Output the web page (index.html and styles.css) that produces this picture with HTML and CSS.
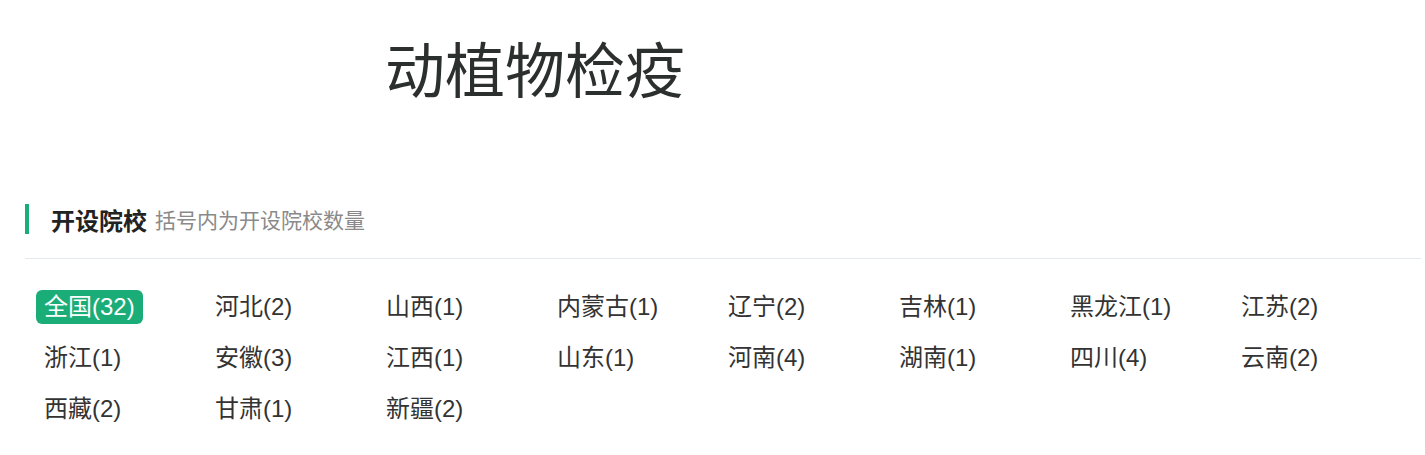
FILE: index.html
```html
<!DOCTYPE html>
<html lang="zh-CN">
<head>
	<meta charset="UTF-8">
	<title>动植物检疫</title>
	<link rel="stylesheet" href="styles.css">
</head>
<body>
	<div id="page">
		<h1 class="major-title">动植物检疫</h1>

		<div class="section-head">
			<span class="head-main">开设院校</span>
			<span class="head-sub">括号内为开设院校数量</span>
		</div>

		<div class="province-list">
			<a href="javascript:;" class="province active">全国(32)</a>
			<a href="javascript:;" class="province">河北(2)</a>
			<a href="javascript:;" class="province">山西(1)</a>
			<a href="javascript:;" class="province">内蒙古(1)</a>
			<a href="javascript:;" class="province">辽宁(2)</a>
			<a href="javascript:;" class="province">吉林(1)</a>
			<a href="javascript:;" class="province">黑龙江(1)</a>
			<a href="javascript:;" class="province">江苏(2)</a>
			<a href="javascript:;" class="province">浙江(1)</a>
			<a href="javascript:;" class="province">安徽(3)</a>
			<a href="javascript:;" class="province">江西(1)</a>
			<a href="javascript:;" class="province">山东(1)</a>
			<a href="javascript:;" class="province">河南(4)</a>
			<a href="javascript:;" class="province">湖南(1)</a>
			<a href="javascript:;" class="province">四川(4)</a>
			<a href="javascript:;" class="province">云南(2)</a>
			<a href="javascript:;" class="province">西藏(2)</a>
			<a href="javascript:;" class="province">甘肃(1)</a>
			<a href="javascript:;" class="province">新疆(2)</a>
		</div>
	</div>
</body>
</html>
```

FILE: styles.css
```css
* {
    margin: 0;
    padding: 0;
    text-decoration: none;
}

body {
    font-family: "Liberation Sans", "Noto Sans CJK SC", sans-serif;
    color: #333;
    background: #fff;
}

#page {
    padding: 43px 4px 0 25px;
}

.major-title {
    margin-left: 360px;
    font-size: 60px;
    font-weight: normal;
    line-height: 60px;
    color: #2b2f2e;
}

.section-head {
    display: flex;
    align-items: center;
    height: 30px;
    margin-top: 101px;
    padding-left: 22px;
    border-left: 4px solid #1aad78;
}

.head-main {
    font-size: 24px;
    font-weight: bold;
    color: #222;
}

.head-sub {
    margin-left: 8px;
    font-size: 21px;
    color: #8a8a8a;
}

.province-list {
    display: grid;
    grid-template-columns: repeat(8, 171px);
    row-gap: 17px;
    margin-top: 24px;
    padding: 31px 0 0 11px;
    border-top: 1px solid #e3e9ef;
}

.province {
    justify-self: start;
    height: 34px;
    padding: 0 8px;
    font-size: 24px;
    line-height: 34px;
    color: #333;
    border-radius: 6px;
}

.province.active {
    color: #fff;
    background: #1aad78;
}
```
